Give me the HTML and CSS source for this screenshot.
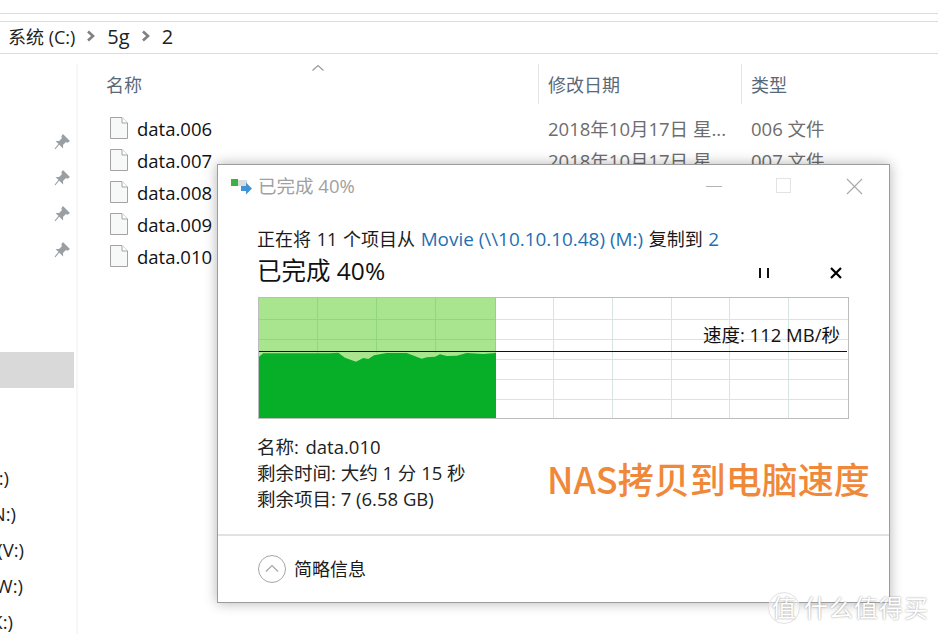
FILE: index.html
```html
<!DOCTYPE html>
<html lang="zh-CN">
<head>
    <meta charset="UTF-8">
    <meta name="viewport" content="width=device-width, initial-scale=1.0">
    <title>已完成 40%</title>
    <link rel="stylesheet" href="styles.css">
</head>
<body>
<div class="explorer">
    <div class="ribbon"></div>
    <div class="crumbs">
        <span>系统 (C:)</span>
        <svg width="8" height="12" viewBox="0 0 8 12"><path d="M1 1.500 6 6 1 10.500" fill="none" stroke="#808080" stroke-width="2.600"/></svg>
        <span class="crumb-latin">5g</span>
        <svg width="8" height="12" viewBox="0 0 8 12"><path d="M1 1.500 6 6 1 10.500" fill="none" stroke="#808080" stroke-width="2.600"/></svg>
        <span class="crumb-latin">2</span>
    </div>
    <div class="content">
        <div class="nav">
            <div class="pins">
                <svg width="18" height="18" viewBox="0 0 18 18"><path d="M10 2 16 8 14.500 9 12.500 8.500 9.500 11.500 9.500 14 4 8.500 6.500 8.500 9.500 5.500 9 3.500Z M6 11 2 16" fill="#9a9fa3" stroke="#9a9fa3" stroke-width="1.200"/></svg>
                <svg width="18" height="18" viewBox="0 0 18 18"><path d="M10 2 16 8 14.500 9 12.500 8.500 9.500 11.500 9.500 14 4 8.500 6.500 8.500 9.500 5.500 9 3.500Z M6 11 2 16" fill="#9a9fa3" stroke="#9a9fa3" stroke-width="1.200"/></svg>
                <svg width="18" height="18" viewBox="0 0 18 18"><path d="M10 2 16 8 14.500 9 12.500 8.500 9.500 11.500 9.500 14 4 8.500 6.500 8.500 9.500 5.500 9 3.500Z M6 11 2 16" fill="#9a9fa3" stroke="#9a9fa3" stroke-width="1.200"/></svg>
                <svg width="18" height="18" viewBox="0 0 18 18"><path d="M10 2 16 8 14.500 9 12.500 8.500 9.500 11.500 9.500 14 4 8.500 6.500 8.500 9.500 5.500 9 3.500Z M6 11 2 16" fill="#9a9fa3" stroke="#9a9fa3" stroke-width="1.200"/></svg>
            </div>
            <div class="nav-selected"></div>
            <div class="drives">
                <div class="drive">:)</div>
                <div class="drive">N:)</div>
                <div class="drive">(V:)</div>
                <div class="drive">W:)</div>
                <div class="drive">K:)</div>
            </div>
        </div>
        <div class="files">
            <div class="file-head">
                <div class="col col-name">名称
                    <svg class="sort-caret" width="14" height="8" viewBox="0 0 14 8"><path d="M1.500 6.500 7 1.500 12.500 6.500" fill="none" stroke="#9a9a9a" stroke-width="1.200"/></svg>
                </div>
                <div class="col col-date">修改日期</div>
                <div class="col col-type">类型</div>
            </div>
            <div class="file-row">
                <div class="col-name name-cell">
                    <svg width="18" height="22" viewBox="0 0 18 22"><path d="M.5.500H12L17.500 6V21.500H.5Z" fill="#f7f8f8" stroke="#a3a3a3"/><path d="M12 .5V6H17.500" fill="#fff" stroke="#a3a3a3"/></svg>
                    data.006
                </div>
                <div class="col-date meta">2018年10月17日 星...</div>
                <div class="col-type meta">006 文件</div>
            </div>
            <div class="file-row">
                <div class="col-name name-cell">
                    <svg width="18" height="22" viewBox="0 0 18 22"><path d="M.5.500H12L17.500 6V21.500H.5Z" fill="#f7f8f8" stroke="#a3a3a3"/><path d="M12 .5V6H17.500" fill="#fff" stroke="#a3a3a3"/></svg>
                    data.007
                </div>
                <div class="col-date meta">2018年10月17日 星...</div>
                <div class="col-type meta">007 文件</div>
            </div>
            <div class="file-row">
                <div class="col-name name-cell">
                    <svg width="18" height="22" viewBox="0 0 18 22"><path d="M.5.500H12L17.500 6V21.500H.5Z" fill="#f7f8f8" stroke="#a3a3a3"/><path d="M12 .5V6H17.500" fill="#fff" stroke="#a3a3a3"/></svg>
                    data.008
                </div>
            </div>
            <div class="file-row">
                <div class="col-name name-cell">
                    <svg width="18" height="22" viewBox="0 0 18 22"><path d="M.5.500H12L17.500 6V21.500H.5Z" fill="#f7f8f8" stroke="#a3a3a3"/><path d="M12 .5V6H17.500" fill="#fff" stroke="#a3a3a3"/></svg>
                    data.009
                </div>
            </div>
            <div class="file-row">
                <div class="col-name name-cell">
                    <svg width="18" height="22" viewBox="0 0 18 22"><path d="M.5.500H12L17.500 6V21.500H.5Z" fill="#f7f8f8" stroke="#a3a3a3"/><path d="M12 .5V6H17.500" fill="#fff" stroke="#a3a3a3"/></svg>
                    data.010
                </div>
            </div>
        </div>
    </div>
</div>

<div class="copy-dialog">
    <div class="title-bar">
        <svg class="title-icon" width="22" height="17" viewBox="0 0 22 17">
            <rect x="0" y="0" width="7" height="7" fill="#3cb043"/>
            <rect x="7" y="1" width="9" height="6" fill="#d9dde0"/>
            <path d="M10 7H15V3.500L21 9.500 15 15.500V12H10Z" fill="#3f94d8"/>
        </svg>
        <span class="title-text">已完成 40%</span>
        <div class="window-btns">
            <svg width="18" height="18" viewBox="0 0 18 18"><path d="M1 9.500H17" stroke="#b3b3b3"/></svg>
            <svg width="16" height="16" viewBox="0 0 16 16"><rect x=".5" y=".5" width="14" height="14" fill="none" stroke="#e3e3e3"/></svg>
            <svg width="18" height="18" viewBox="0 0 18 18"><path d="M2 2 17 17M17 2 2 17" stroke="#a8a8a8" stroke-width="1.100"/></svg>
        </div>
    </div>

    <div class="dialog-body">
        <div class="copy-line">正在将 11 个项目从 <span class="link">Movie (\\10.10.10.48) (M:)</span> 复制到 <span class="link">2</span></div>
        <div class="progress-head">
            <div class="progress-title">已完成 40%</div>
            <div class="progress-btns">
                <svg width="12" height="12" viewBox="0 0 12 12"><path d="M2 1V11M10 1V11" stroke="#111" stroke-width="2"/></svg>
                <svg width="14" height="14" viewBox="0 0 14 14"><path d="M2 2 12 12M12 2 2 12" stroke="#000" stroke-width="2.200"/></svg>
            </div>
        </div>
        <div class="graph">
            <svg width="589" height="120" viewBox="0 0 589 120">
                <rect x="0" y="0" width="237" height="120" fill="#a9e58f"/>
                <g stroke="#d6e6df">
                    <path d="M237 21.500H589M237 41.500H589M237 61.500H589M237 81.500H589M237 101.500H589"/>
                    <path d="M294.500 0V120M353.500 0V120M412.500 0V120M470.500 0V120M529.500 0V120"/>
                </g>
                <g stroke="#90d87f">
                    <path d="M0 21.500H237M0 41.500H237"/>
                    <path d="M58.500 0V55M117.500 0V55M176.500 0V55M236.500 0V120"/>
                </g>
                <path d="M0 58.700 4.300 55.300 71 55.300 79.300 54.700 86 59.700 97 63.700 104.300 60 109.300 61 115 57.300 127.700 55 147.700 55 162.700 60.700 167.700 59.300 176 58.700 181 56.300 187.700 58 197.700 57.700 207.700 55 224.300 56 237 55V120H0Z" fill="#07ae28"/>
                <path d="M0 53.500H588" stroke="#111"/>
            </svg>
            <span class="speed">速度: 112 MB/秒</span>
        </div>
        <div class="details">
            <div class="detail-name">名称: &nbsp;data.010</div>
            <div>剩余时间: 大约 1 分 15 秒</div>
            <div>剩余项目: 7 (6.58 GB)</div>
            <div class="note">NAS拷贝到电脑速度</div>
        </div>
    </div>

    <div class="dialog-foot">
        <svg width="30" height="30" viewBox="0 0 30 30"><circle cx="15" cy="15" r="13.500" fill="#fff" stroke="#a6a6a6"/><path d="M9 17.500 15 11.500 21 17.500" fill="none" stroke="#a6a6a6" stroke-width="1.200"/></svg>
        <span class="foot-text">简略信息</span>
    </div>
</div>

<div class="watermark">
    <span class="wm-badge">值</span>
    <span class="wm-text">什么值得买</span>
</div>
</body>
</html>
```

FILE: styles.css
```css
* {
    margin: 0;
    padding: 0;
    box-sizing: border-box;
}

body {
    width: 938px;
    height: 634px;
    overflow: hidden;
    position: relative;
    background: #fff;
    color: #1a1a1a;
    font-family: "Open Sans", "Noto Sans CJK SC", sans-serif;
    font-size: 18.5px;
}

/* 资源管理器 */
.ribbon {
    height: 22px;
    border-bottom: 1px solid #dcdcdc;
}
.ribbon::before {
    content: '';
    display: block;
    height: 13px;
    border-bottom: 1px solid #dcdcdc;
}

.crumbs {
    height: 32px;
    display: flex;
    align-items: center;
    gap: 12px;
    padding: 0 0 3px 8px;
    border-bottom: 1px solid #dcdcdc;
    font-size: 18px;
    color: #222;
}
.crumb-latin {
    font-size: 20px;
}

.content {
    display: flex;
}

.nav {
    width: 78px;
    height: 580px;
    flex-shrink: 0;
    border-right: 2px solid #f7f7f7;
    margin-top: 10px;
    padding-top: 69px;
}
.pins {
    height: 219px;
    display: flex;
    flex-direction: column;
    align-items: flex-end;
    gap: 18px;
    padding-right: 5px;
}
.nav-selected {
    width: 74px;
    height: 36px;
    background: #d9d9d9;
}
.drives {
    margin-top: 72px;
}
.drive {
    height: 36px;
    line-height: 36px;
    display: flex;
    justify-content: flex-end;
    color: #222;
    white-space: nowrap;
}
/* 左侧被窗口裁掉，只露出盘符的右半部分 */
.drive:nth-child(1) { width: 9px; }
.drive:nth-child(2) { width: 16px; }
.drive:nth-child(3) { width: 24px; }
.drive:nth-child(4) { width: 23px; }
.drive:nth-child(5) { width: 13px; }

.files {
    flex: 1;
}
.file-head {
    display: flex;
    height: 40px;
    margin-top: 10px;
    margin-bottom: 8px;
    color: #5a6978;
    font-size: 18px;
}
.col {
    height: 40px;
    line-height: 42px;
    position: relative;
}
.col-name {
    width: 460px;
    padding-left: 28px;
}
.col-date {
    width: 203px;
    padding-left: 9px;
}
.col-type {
    padding-left: 9px;
}
.col-date.col,
.col-type.col {
    border-left: 1px solid #e3e3e3;
}
.sort-caret {
    position: absolute;
    left: 233px;
    top: 0;
}

.file-row {
    display: flex;
    height: 32px;
    align-items: center;
}
.name-cell {
    display: flex;
    align-items: center;
    gap: 9px;
    padding-left: 32px;
    color: #111;
}
.meta {
    color: #6d6d6d;
    white-space: nowrap;
    padding-left: 10px;
}

/* 复制对话框 */
.copy-dialog {
    position: absolute;
    left: 217px;
    top: 164px;
    width: 673px;
    height: 439px;
    background: #fff;
    border: 1px solid #9c9c9c;
    box-shadow: 0 0 12px rgba(0, 0, 0, 0.3);
    display: flex;
    flex-direction: column;
}

.title-bar {
    height: 42px;
    display: flex;
    align-items: center;
    padding: 0 26px 0 13px;
    flex-shrink: 0;
}
.title-icon {
    margin: 2px 5px 0 0;
}
.title-text {
    color: #a0a0a0;
    margin-top: -2px;
}
.window-btns {
    margin-left: auto;
    display: flex;
    align-items: center;
    gap: 53px;
}

.dialog-body {
    flex: 1;
    padding: 16px 40px 0 39px;
}
.copy-line {
    height: 32px;
    line-height: 32px;
    font-size: 18px;
    word-spacing: 1px;
}
.link {
    color: #1f6fb2;
    font-size: 18.900px;
    word-spacing: 0;
}
.progress-head {
    height: 32px;
    display: flex;
    align-items: center;
    justify-content: space-between;
}
.progress-title {
    font-size: 24.500px;
    color: #111;
    margin-top: -4px;
}
.progress-btns {
    display: flex;
    align-items: center;
    gap: 59px;
    padding: 3px 6px 0 0;
}
.graph {
    position: relative;
    width: 591px;
    height: 122px;
    margin: 10px 0 0 1px;
    border: 1px solid #bcbcbc;
    background: #fff;
}
.graph svg {
    display: block;
}
.speed {
    position: absolute;
    right: 8px;
    top: 24px;
    line-height: 26px;
    color: #111;
}
.details {
    position: relative;
    margin-top: 15px;
    line-height: 26px;
    color: #222;
}
.detail-name {
    word-spacing: -1.500px;
}
.note {
    position: absolute;
    left: 290px;
    top: 24px;
    color: #f0883a;
    font-family: "Noto Sans CJK SC", sans-serif;
    font-size: 36px;
    font-weight: 500;
    line-height: 40px;
    white-space: nowrap;
}

.dialog-foot {
    height: 68px;
    border-top: 2px solid #e2e2e2;
    display: flex;
    align-items: center;
    gap: 7px;
    padding-left: 39px;
    flex-shrink: 0;
}
.foot-text {
    font-size: 18px;
    margin-top: -2px;
}

/* 水印 */
.watermark {
    position: absolute;
    left: 768px;
    top: 592px;
    display: flex;
    align-items: center;
    gap: 4px;
    color: #fff;
    text-shadow: 0 0 2px #8a8a8a;
}
.wm-badge {
    width: 32px;
    height: 32px;
    line-height: 30px;
    text-align: center;
    font-size: 24px;
    border-radius: 50%;
    border: 1px solid #e2e2e2;
    background: rgba(255, 255, 255, 0.5);
}
.wm-text {
    font-size: 24px;
    line-height: 32px;
    letter-spacing: 1px;
}
```
